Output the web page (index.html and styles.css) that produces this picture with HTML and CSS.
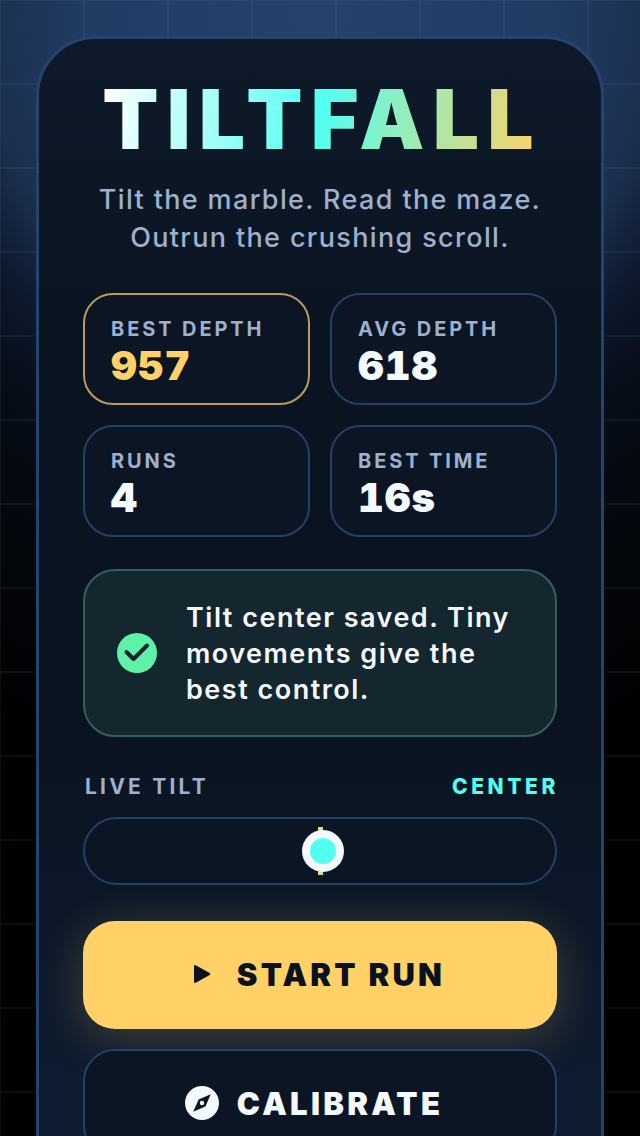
FILE: index.html
```html
<!DOCTYPE html>
<html lang="en">
<head>
    <meta charset="UTF-8">
    <title>Tiltfall</title>
    <link rel="stylesheet" href="styles.css">
</head>
<body>
    <main class="panel">
        <h1 class="logo">TILTFALL</h1>
        <p class="tagline">Tilt the marble. Read the maze.<br>Outrun the crushing scroll.</p>

        <section class="stats">
            <div class="stat stat-best">
                <span class="stat-label">BEST DEPTH</span>
                <span class="stat-value">957</span>
            </div>
            <div class="stat">
                <span class="stat-label">AVG DEPTH</span>
                <span class="stat-value">618</span>
            </div>
            <div class="stat">
                <span class="stat-label">RUNS</span>
                <span class="stat-value">4</span>
            </div>
            <div class="stat">
                <span class="stat-label">BEST TIME</span>
                <span class="stat-value">16s</span>
            </div>
        </section>

        <section class="notice">
            <svg class="notice-icon" viewBox="0 0 40 40">
                <circle cx="20" cy="20" r="20" fill="#5ef2a8"/>
                <path d="M9.500 19l7 7 13.500-13.500" fill="none" stroke="#12232c" stroke-width="4" stroke-linecap="round" stroke-linejoin="round"/>
            </svg>
            <p class="notice-text">Tilt center saved. Tiny movements give the best control.</p>
        </section>

        <div class="tilt-head">
            <span class="tilt-label">LIVE TILT</span>
            <span class="tilt-state">CENTER</span>
        </div>
        <div class="tilt-track">
            <span class="tilt-mark"></span>
            <span class="tilt-thumb"></span>
        </div>

        <button class="btn btn-start">
            <svg class="btn-icon-play" viewBox="0 0 18 20">
                <path d="M1 2.200v15.600c0 .9 1 1.400 1.700 1l14-7.800c.8-.4.8-1.500 0-2l-14-7.800c-.7-.4-1.700.1-1.700 1z" fill="#0a1220"/>
            </svg>
            START RUN
        </button>
        <button class="btn btn-calibrate">
            <svg class="btn-icon-compass" viewBox="0 0 34 34">
                <circle cx="17" cy="17" r="17" fill="#f4f9ff"/>
                <path d="M25.800 8.200L20.400 20.400 8.200 25.800 13.600 13.600z" fill="#0c1524"/>
                <circle cx="17" cy="17" r="2.200" fill="#f4f9ff"/>
            </svg>
            CALIBRATE
        </button>
    </main>
</body>
</html>
```

FILE: styles.css
```css
* {
    box-sizing: border-box;
}
html, body {
    height: 100%;
    overflow: hidden;
}
body {
    margin: 0;
    font-family: Inter, "Liberation Sans", sans-serif;
    color: #f4f9ff;
    background-color: #000;
    background-image:
        linear-gradient(rgba(120, 190, 210, 0.07) 2px, transparent 2px),
        linear-gradient(90deg, rgba(120, 190, 210, 0.07) 2px, transparent 2px),
        radial-gradient(ellipse 760px 800px at 50% 0, #25426d 0%, #223c64 30%, #1b2f4e 45%, #0e1a2f 53%, #080f1c 61%, #050a12 70%, #030508 86%, #000 100%);
    background-size: 84px 84px, 84px 84px, 100% 100%;
    background-position: 0 -1px, -1px 0, 0 0;
    padding: 36px 36px 0;
}
.panel {
    height: 1200px;
    padding: 0 44px;
    border: 3px solid #224570;
    border-radius: 60px;
    background: linear-gradient(180deg, #0e1a2a 0, #0a1421 300px, #0a1421 700px, #0e1c30 1050px);
}
.logo {
    margin: 38px 0 0;
    padding-left: 4px;
    font-size: 82px;
    line-height: 86px;
    font-weight: 900;
    letter-spacing: 8.2px;
    text-align: center;
    background: linear-gradient(100deg, #ffffff 4%, #52fff0 50%, #ffd166 96%);
    -webkit-background-clip: text;
    background-clip: text;
    color: transparent;
}
.tagline {
    margin: 18px 0 0;
    font-size: 27px;
    line-height: 38px;
    font-weight: 500;
    letter-spacing: 1.36px;
    text-align: center;
    color: #9db0cd;
}
.stats {
    display: grid;
    grid-template-columns: 1fr 1fr;
    gap: 20px;
    margin-top: 36px;
}
.stat {
    display: flex;
    flex-direction: column;
    height: 112px;
    padding: 22px 26px 0;
    border: 2px solid #21416b;
    border-radius: 30px;
    background: #0b1524;
}
.stat-best {
    border-color: #b89c5c;
}
.stat-best .stat-value {
    color: #ffd166;
}
.stat-label {
    font-size: 20px;
    line-height: 24px;
    font-weight: 700;
    letter-spacing: 2.9px;
    color: #9db0cd;
}
.stat-value {
    margin-top: 2px;
    font-size: 40px;
    line-height: 46px;
    font-weight: 900;
    letter-spacing: 1px;
    font-variant-numeric: tabular-nums;
}
.notice {
    display: flex;
    align-items: center;
    gap: 29px;
    margin-top: 32px;
    height: 168px;
    padding: 0 32px;
    border: 2px solid #33605f;
    border-radius: 32px;
    background: #14262e;
}
.notice-icon {
    flex: none;
    width: 40px;
    height: 40px;
}
.notice-text {
    margin: 0;
    padding-top: 2px;
    font-size: 27px;
    line-height: 36px;
    font-weight: 600;
    letter-spacing: 1.5px;
}
.tilt-head {
    display: flex;
    justify-content: space-between;
    margin-top: 37px;
    padding: 0 1px 0 2px;
    font-size: 21px;
    line-height: 26px;
    letter-spacing: 3.2px;
}
.tilt-label {
    font-weight: 700;
    color: #9db0cd;
}
.tilt-state {
    margin-right: -3px;
    font-weight: 800;
    letter-spacing: 3.6px;
    color: #52fff0;
}
.tilt-track {
    position: relative;
    height: 68px;
    margin-top: 17px;
    border: 2px solid #21416b;
    border-radius: 34px;
    background: #0b1524;
}
.tilt-mark {
    position: absolute;
    left: 233px;
    top: 8px;
    width: 5px;
    height: 48px;
    background: linear-gradient(90deg, #ffd166 80%, #52fff0 80%);
}
.tilt-thumb {
    position: absolute;
    left: 217px;
    top: 11px;
    width: 42px;
    height: 42px;
    border: 8px solid #f4f9ff;
    border-radius: 50%;
    background: #52fff0;
}
.btn {
    display: flex;
    align-items: center;
    justify-content: center;
    width: 100%;
    font-family: inherit;
    font-size: 31px;
    font-weight: 900;
    letter-spacing: 3.3px;
}
.btn-start {
    gap: 26px;
    height: 108px;
    margin-top: 36px;
    padding: 0 2px 2px 0;
    border: none;
    border-radius: 32px;
    color: #0a1220;
    background: #ffd166;
    box-shadow: 0 8px 48px rgba(255, 209, 102, 0.22);
}
.btn-icon-play {
    width: 18px;
    height: 20px;
}
.btn-calibrate {
    gap: 18px;
    height: 108px;
    margin-top: 20px;
    padding-right: 18px;
    border: 2px solid #21416b;
    border-radius: 32px;
    color: #f4f9ff;
    background: #0b1524;
}
.btn-icon-compass {
    width: 34px;
    height: 34px;
}
```
